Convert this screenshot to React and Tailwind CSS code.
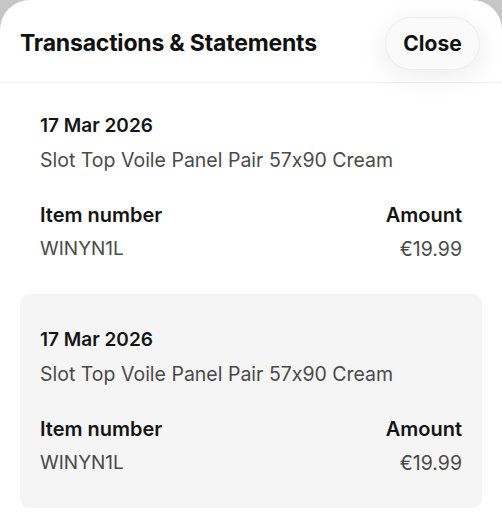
import React from 'react';

const items = [
  { date: '17 Mar 2026', title: 'Slot Top Voile Panel Pair 57x90 Cream', number: 'WINYN1L', amount: '€19.99', shaded: false },
  { date: '17 Mar 2026', title: 'Slot Top Voile Panel Pair 57x90 Cream', number: 'WINYN1L', amount: '€19.99', shaded: true },
];

function TransactionCard({ item, first }) {
  return (
    <div
      className={
        'rounded-[9px] px-5 pb-[28px] ' +
        (item.shaded ? 'bg-[#f5f5f5] ' : 'bg-white ') +
        (first ? 'pt-[26px]' : 'pt-[29px]')
      }
    >
      <div className="text-[19px] leading-[34px] font-semibold text-[#151515]">{item.date}</div>
      <div className="text-[19.5px] leading-[34px] text-[#4a4a4a]">{item.title}</div>
      <div className="mt-[21px] flex justify-between">
        <div>
          <div className="text-[20px] leading-[34px] font-semibold text-[#151515]">Item number</div>
          <div className="text-[19px] leading-[34px] text-[#4a4a4a]">{item.number}</div>
        </div>
        <div className="text-right">
          <div className="text-[20px] leading-[34px] font-semibold text-[#151515]">Amount</div>
          <div className="text-[19.5px] leading-[34px] text-[#4a4a4a]">{item.amount}</div>
        </div>
      </div>
    </div>
  );
}

export default function App() {
  return (
    <div
      className="w-[502px] h-[525px] bg-[#c6c6c6] overflow-hidden [font-feature-settings:'calt'_0]"
      style={{ fontFamily: 'Inter, "Noto Sans", sans-serif' }}
    >
      <div className="h-full bg-white rounded-t-[30px]">
        <div className="h-[83px] border-b border-[#f0f0f0] flex items-center justify-between pt-[5px] pl-5 pr-[22px]">
          <h1 className="text-[23px] font-bold text-[#111] tracking-[-0.2px]">Transactions &amp; Statements</h1>
          <button className="h-[53px] w-[95px] rounded-full bg-[#fafafa] border border-[#ededed] shadow-[0_6px_28px_rgba(0,0,0,0.08)] text-[21px] font-bold text-[#111]">
            Close
          </button>
        </div>
        <div className="px-5">
          {items.map((item, i) => (
            <TransactionCard key={i} item={item} first={i === 0} />
          ))}
        </div>
      </div>
    </div>
  );
}
